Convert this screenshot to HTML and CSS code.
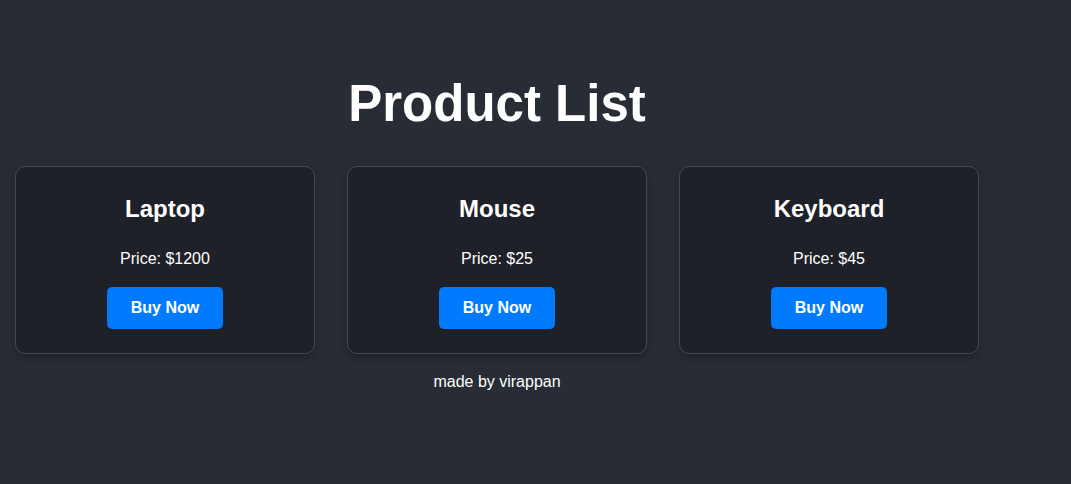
FILE: index.html
```html
<!DOCTYPE html>
<html lang="en">
<head>
<meta charset="utf-8">
<title>Product List</title>
<link rel="stylesheet" href="styles.css">
</head>
<body>
<div class="app">
  <h1 class="title">Product List</h1>
  <div class="products">
    <div class="card">
      <h3 class="card-name">Laptop</h3>
      <p class="card-price">Price: $1200</p>
      <button class="buy">Buy Now</button>
    </div>
    <div class="card">
      <h3 class="card-name">Mouse</h3>
      <p class="card-price">Price: $25</p>
      <button class="buy">Buy Now</button>
    </div>
    <div class="card">
      <h3 class="card-name">Keyboard</h3>
      <p class="card-price">Price: $45</p>
      <button class="buy">Buy Now</button>
    </div>
  </div>
  <p class="footer">made by virappan</p>
</div>
</body>
</html>
```
FILE: styles.css
```css
html, body {
  margin: 0;
  padding: 0;
  height: 100%;
}
body {
  background: #282c34;
  color: #ffffff;
  font-family: "Liberation Sans", Arial, sans-serif;
}
.app {
  width: 994px;
  padding-top: 74px;
  display: flex;
  flex-direction: column;
  align-items: center;
}
.title {
  margin: 0;
  font-size: 51px;
  line-height: 59px;
  font-weight: bold;
  text-align: center;
}
.products {
  margin-top: 33px;
  display: flex;
  gap: 32px;
  justify-content: center;
}
.card {
  box-sizing: border-box;
  width: 300px;
  height: 188px;
  background: #1f2128;
  border: 1px solid #4a4a4a;
  border-radius: 10px;
  box-shadow: 0 4px 8px rgba(0, 0, 0, 0.25);
  display: flex;
  flex-direction: column;
  align-items: center;
  padding-top: 28px;
}
.card-name {
  margin: 0;
  font-size: 24px;
  font-weight: bold;
}
.card-price {
  margin: 27px 0 0;
  font-size: 16px;
  line-height: 18px;
}
.buy {
  margin-top: 19px;
  width: 116px;
  height: 42px;
  background: #007bff;
  color: #ffffff;
  border: none;
  border-radius: 5px;
  font-family: "Liberation Sans", Arial, sans-serif;
  font-size: 16px;
  font-weight: bold;
  cursor: pointer;
}
.footer {
  margin: 19px 0 0;
  font-size: 16px;
  line-height: 18px;
  text-align: center;
}
```
